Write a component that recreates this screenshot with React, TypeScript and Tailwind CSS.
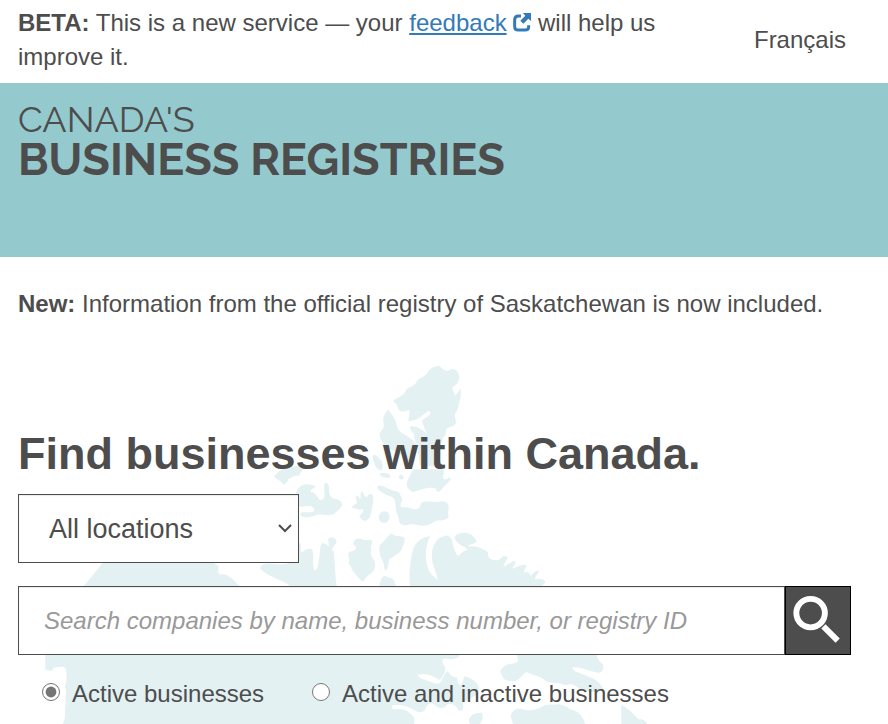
import React, { useState } from 'react';

const CanadaMap: React.FunctionComponent = () => {
    return (
        <svg viewBox="0 1050 2100 1122" className="absolute left-0 bottom-0 w-[700px] h-[374px] pointer-events-none" aria-hidden="true">
            {/* arctic islands */}
            <g fill="#e3f1f3" transform="translate(780 1050)">
                <path d="M538 48 C525 47 510 55 502 68 C490 86 475 82 470 95 C460 112 440 112 437 122 C434 137 403 146 399 154 C403 158 412 163 413 172 C414 182 424 187 432 184 L449 180 C450 190 446 200 445 212 C455 215 475 208 485 198 L505 183 C513 183 513 192 508 196 C500 204 486 208 486 216 L500 250 C485 240 475 228 452 228 C447 236 455 245 462 251 C463 262 462 270 470 280 L480 345 L520 350 L550 262 C562 255 555 240 562 234 C572 232 588 226 588 216 C588 208 582 200 586 190 C595 180 597 160 601 145 C604 130 602 118 602 115 L586 137 C582 128 578 120 577 110 C592 106 598 92 598 82 C597 66 588 56 575 56 C562 66 555 62 545 54 Z" />
                <path d="M386 180 C375 186 372 198 370 205 C368 215 375 230 368 238 C358 248 358 256 361 264 C368 278 372 290 390 298 C410 306 425 310 430 330 L462 345 L470 284 C460 272 450 262 436 256 C420 246 412 238 410 225 C408 210 398 196 386 180 Z" />
                <path d="M440 398 C446 385 450 372 462 358 L550 358 C556 372 545 382 552 388 C562 390 568 378 572 384 C572 396 556 402 550 412 C545 420 536 430 530 425 C532 415 520 412 505 414 C485 416 470 424 458 426 C446 420 438 408 440 398 Z" />
                <path d="M340 315 C348 312 354 322 360 328 C368 334 370 348 366 362 C354 360 346 352 344 340 C338 332 336 322 340 315 Z" />
                <path d="M360 370 C372 364 390 372 392 380 C388 386 366 384 360 376 Z M418 376 C428 372 434 378 430 386 C422 392 414 386 418 376 Z" />
                <path d="M42 380 C52 366 70 352 90 350 L138 345 C130 362 118 368 118 378 C105 372 95 382 85 388 C82 396 76 404 70 404 C66 394 54 390 42 380 Z" />
                <path d="M108 430 C110 412 130 400 142 403 C156 404 162 408 168 408 C160 416 150 420 152 426 C162 426 170 436 176 446 C182 454 192 448 193 440 C196 426 188 404 196 399 C206 397 208 410 207 424 C208 436 215 446 224 446 C238 448 248 456 246 466 C240 480 228 484 222 492 C205 498 190 492 172 494 C156 498 144 504 134 502 C124 500 118 492 122 488 C136 484 150 490 162 484 C166 476 158 468 148 468 L118 470 Z" />
                <path d="M286 442 C290 434 298 440 300 448 C304 440 300 430 304 424 C312 428 312 440 320 442 C326 428 340 428 340 444 C340 464 334 480 332 494 C328 506 322 512 314 512 C304 510 302 504 298 498 C306 490 314 482 308 478 C298 482 290 474 274 474 C278 464 294 464 290 454 Z" />
                <path d="M352 408 C366 402 376 414 392 418 C402 424 416 424 420 432 C422 442 430 444 426 452 C420 462 420 472 428 472 C444 470 458 478 470 478 C480 476 480 468 484 458 C500 452 518 456 532 456 C544 452 560 454 565 464 C568 478 562 490 566 500 C560 512 544 510 528 512 C518 516 514 524 500 526 C482 530 466 522 450 522 C440 528 428 528 420 520 C414 508 416 498 410 488 C406 474 408 462 404 450 C400 440 390 440 382 436 C368 430 350 420 352 408 Z" />
                <path d="M356 500 C358 486 372 480 382 486 C392 494 390 512 378 518 C364 520 356 512 356 500 Z" />
                <path d="M204 568 C212 558 224 560 230 574 C228 584 220 590 214 600 C202 592 208 580 204 568 Z" />
                <path d="M280 576 C288 562 302 564 312 570 C322 572 332 566 336 572 C338 582 330 588 334 600 C330 612 334 620 342 630 C348 646 346 656 338 666 C330 674 318 678 314 690 C308 698 302 692 296 684 C286 672 274 660 272 648 C262 640 268 634 268 626 C262 612 264 606 274 604 C284 602 290 596 288 590 C282 586 280 582 280 576 Z" />
                <path d="M360 584 C372 576 380 560 396 550 C402 562 418 556 432 562 C438 570 430 582 426 596 C420 610 402 618 388 628 C384 640 386 652 378 664 C370 656 374 642 368 632 C360 622 358 606 358 596 Z" />
                <path d="M358 708 C362 692 366 678 374 678 C388 684 398 684 402 690 L408 708 Z" />
                <path d="M450 708 C446 680 450 650 454 624 C458 588 470 566 510 558 C500 580 494 610 500 640 C504 664 516 678 534 690 C528 660 512 640 516 606 C520 584 530 564 548 560 C560 552 568 558 574 566 C580 580 580 600 594 618 C604 610 610 602 622 600 C620 588 596 590 584 566 C582 550 610 546 624 550 C640 556 648 568 650 576 C640 584 630 580 624 590 C640 586 666 592 684 606 C684 618 684 626 700 630 C716 634 722 626 730 618 L744 620 C740 632 732 640 730 650 C744 646 754 634 764 632 C772 640 756 650 758 656 C774 650 786 640 800 646 C800 654 788 662 792 668 C806 664 812 670 810 678 C820 672 828 660 836 662 C836 672 822 680 826 688 C840 684 854 688 856 696 L846 708 Z" />
                <path d="M0 655 C4 640 20 640 40 642 C56 644 74 644 84 640 C72 632 44 636 22 632 C8 626 50 600 117 578 C122 576 124 590 122 608 C132 604 142 592 156 598 C164 612 156 640 162 660 C170 664 176 650 176 630 C182 610 178 588 186 580 C198 578 206 590 222 606 C224 640 226 680 230 708 L90 708 C70 690 20 680 0 655 Z" />
            </g>
            {/* mainland */}
            <g fill="#e3f1f3" transform="translate(0 1440)">
                <path d="M310 246 L640 246 C640 254 656 252 656 262 C656 270 650 280 662 284 C680 278 700 298 718 318 L800 440 L900 732 L188 732 C200 715 192 690 198 670 C192 650 204 634 194 622 C202 602 200 580 198 566 C190 556 172 562 160 564 C158 578 146 570 136 570 L135 440 L252 318 Z" />
            </g>
            <g fill="#e3f1f3" transform="translate(900 1710)">
                <path d="M-120 250 L480 250 C478 266 460 270 440 266 C424 264 424 276 432 286 C442 300 432 314 420 330 C404 322 384 306 352 314 C356 326 376 328 394 336 C408 344 418 342 424 334 C430 318 440 300 444 304 C450 316 458 322 470 322 C474 342 484 360 492 320 C504 318 518 330 530 338 C536 350 544 366 528 374 C514 384 500 392 488 400 C494 416 486 430 474 418 C466 402 450 398 440 404 C434 418 414 416 404 404 C396 396 384 400 378 412 C374 428 360 430 346 422 C324 408 300 402 278 406 C274 412 276 418 286 418 C306 414 322 420 332 432 C342 440 346 450 342 462 L-120 462 Z" />
                <path d="M650 250 L888 250 C892 264 896 274 908 282 C914 292 910 306 896 308 C870 306 846 290 818 292 C814 306 846 310 866 320 C890 328 906 342 910 360 C890 372 850 366 830 350 C812 336 808 348 790 344 C774 334 750 342 736 332 C724 320 700 316 680 306 C664 316 660 330 640 334 C620 332 612 330 608 320 C600 306 596 300 612 290 C626 276 650 284 654 272 Z" />
                <path d="M506 450 C514 430 530 428 546 428 C552 440 544 452 540 462 L510 462 Z" />
                <path d="M632 440 C634 420 656 410 668 418 C680 424 700 420 720 414 C730 404 744 402 762 404 C786 400 800 410 810 418 C830 422 846 432 856 462 L640 462 Z" />
                <path d="M964 404 C980 412 1000 430 1016 448 C1028 446 1036 450 1042 462 L964 462 Z" />
            </g>
        </svg>
    );
};

const ExternalLinkIcon: React.FunctionComponent = () => {
    return (
        <svg viewBox="0 0 54 57" className="inline-block w-[18px] h-[19px] align-[-1px]" aria-hidden="true">
            <path d="M24 9 H17 Q5 9 5 20 V41 Q5 51 16 51 H36 Q47 51 47 42 V37" fill="none" stroke="#337ab7" strokeWidth="9" />
            <path d="M30 0 H54 V24 L46 17 L31 32 L22 23 L37 8 Z" fill="#337ab7" />
        </svg>
    );
};

const SearchIcon: React.FunctionComponent = () => {
    return (
        <svg viewBox="0 0 65 67" className="w-full h-full" fill="none" stroke="#fff" aria-hidden="true">
            <circle cx="25" cy="26" r="14.5" strokeWidth="6" />
            <path d="M38 39.5 L52.5 54" strokeWidth="6" />
        </svg>
    );
};

const App: React.FunctionComponent = () => {
    const [location, setLocation] = useState<string>("all");
    const [query, setQuery] = useState<string>("");
    const [status, setStatus] = useState<string>("active");

    return (
        <div className="relative min-h-screen overflow-hidden bg-white text-[#4d4d4d] text-[24px] leading-[34px] font-['Liberation_Sans',Arial,sans-serif]">
            <header>
                <div className="flex items-center justify-between pl-[18px] pr-[42px] pt-[6px] pb-[9px]">
                    <p className="max-w-[660px]">
                        <strong>BETA:</strong> This is a new service — your{" "}
                        <a href="#feedback" className="text-[#337ab7] underline decoration-2 underline-offset-2">feedback</a>{" "}
                        <ExternalLinkIcon />{" "}
                        will help us improve it.
                    </p>
                    <a href="#fr">Français</a>
                </div>
                <div className="h-[174px] bg-[#94cacd] px-[18px] pt-[16px] font-['Raleway','Lato',sans-serif]">
                    <p className="text-[36px] leading-[40px]">CANADA'S</p>
                    <p className="text-[45px] leading-[42px] font-bold">BUSINESS REGISTRIES</p>
                </div>
            </header>
            <main className="px-[18px] pt-[30px]">
                <p><strong>New:</strong> Information from the official registry of Saskatchewan is now included.</p>
                <CanadaMap />
                <form className="relative pt-[108px]" onSubmit={(e) => {
                    e.preventDefault();
                }}>
                    <h1 className="text-[45px] leading-[50px] font-bold">Find businesses within Canada.</h1>
                    <div className="relative mt-[15px] w-[281px]">
                        <select aria-label="Location" value={location} onChange={(e) => {
                            setLocation(e.target.value);
                        }} className="block appearance-none w-full h-[69px] pl-[30px] bg-white border border-[#4d4d4d] text-[27px] shadow-[inset_0_1px_1px_rgba(0,0,0,0.08)]">
                            <option value="all">All locations</option>
                            <option value="sk">Saskatchewan</option>
                        </select>
                        <svg viewBox="0 0 14 9" className="absolute right-[7px] top-[30px] w-[14px] h-[9px] pointer-events-none" fill="none" stroke="#4d4d4d" strokeWidth="2" aria-hidden="true">
                            <path d="M1 1 L7 7 L13 1" />
                        </svg>
                    </div>
                    <div className="mt-[23px] mr-[19px] flex h-[69px]">
                        <input aria-label="Search" type="text" value={query} onChange={(e) => {
                            setQuery(e.target.value);
                        }} placeholder="Search companies by name, business number, or registry ID" className="flex-1 min-w-0 pl-[25px] bg-white border border-[#4d4d4d] placeholder:italic placeholder:text-[#999] shadow-[inset_0_1px_1px_rgba(0,0,0,0.08)]" />
                        <button type="submit" aria-label="Search" className="w-[66px] bg-[#4d4d4d] border border-black">
                            <SearchIcon />
                        </button>
                    </div>
                    <div className="flex pl-[24px] pt-[22px] pb-[13px]">
                        <label className="flex items-center">
                            <input type="radio" name="status" checked={status === "active"} onChange={() => {
                                setStatus("active");
                            }} className="w-[18px] h-[18px] mr-[12px] mb-[4px] accent-[#757575]" />
                            Active businesses
                        </label>
                        <label className="flex items-center ml-[48px]">
                            <input type="radio" name="status" checked={status === "all"} onChange={() => {
                                setStatus("all");
                            }} className="w-[18px] h-[18px] mr-[12px] mb-[4px] accent-[#757575]" />
                            Active and inactive businesses
                        </label>
                    </div>
                </form>
            </main>
        </div>
    );
};

export default App;
